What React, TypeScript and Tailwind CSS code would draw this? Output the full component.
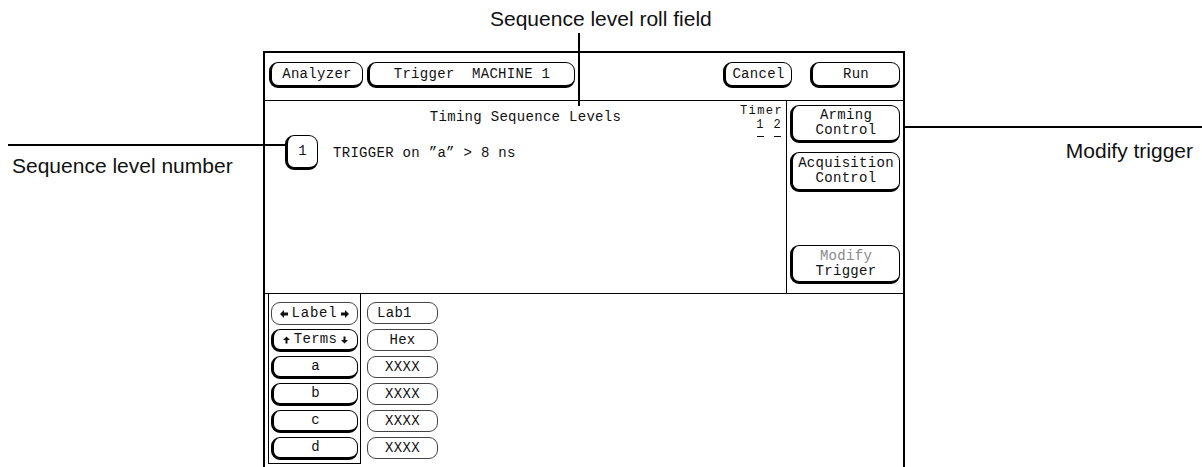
import type { ReactNode } from "react";

const mono = "font-['Liberation_Mono',monospace] text-[14px] tracking-[0.3px] text-[#111]";

type KeyProps = {
	children: ReactNode;
	className?: string;
	flat?: boolean;
};

/** 画面上のソフトキー（左と下が太い） */
function Key({ children, className = "", flat = false }: KeyProps) {
	return (
		<div
			className={`flex shrink-0 items-center justify-center rounded-[9px] border bg-white leading-[15px] ${
				flat ? "border-[#444]" : "border-black border-b-[3px] border-l-[3px]"
			} ${className}`}
		>
			{children}
		</div>
	);
}

function ArrowLeft() {
	return (
		<svg width="8" height="8" viewBox="0 0 8 8" className="shrink-0">
			<path d="M0 4 L4 0 L4 2.5 L8 2.5 L8 5.5 L4 5.5 L4 8 Z" fill="#111" />
		</svg>
	);
}

function ArrowRight() {
	return (
		<svg width="8" height="8" viewBox="0 0 8 8" className="shrink-0">
			<path d="M8 4 L4 0 L4 2.5 L0 2.5 L0 5.5 L4 5.5 L4 8 Z" fill="#111" />
		</svg>
	);
}

function ArrowUp() {
	return (
		<svg width="7" height="8" viewBox="0 0 7 8" className="shrink-0">
			<path d="M3.5 0.5 L7 4 L4.5 4 L4.5 7.5 L2.5 7.5 L2.5 4 L0 4 Z" fill="#111" />
		</svg>
	);
}

function ArrowDown() {
	return (
		<svg width="7" height="8" viewBox="0 0 7 8" className="shrink-0">
			<path d="M3.5 7.5 L7 4 L4.5 4 L4.5 0.5 L2.5 0.5 L2.5 4 L0 4 Z" fill="#111" />
		</svg>
	);
}

const terms = ["a", "b", "c", "d"];

function Screen() {
	return (
		<div className={`absolute left-[263px] top-[51px] flex w-[642px] flex-col border-2 border-black bg-white ${mono}`}>
			{/* header */}
			<div className="flex h-[48px] items-start border-b border-black pl-[4px] pr-[3px] pt-[9px]">
				<Key className="h-[26px] w-[94px]">Analyzer</Key>
				<Key className="ml-[4px] h-[26px] w-[208px] whitespace-pre">Trigger  MACHINE 1</Key>
				<div className="flex-1" />
				<Key className="h-[26px] w-[69px]">Cancel</Key>
				<Key className="ml-[18px] h-[26px] w-[90px]">Run</Key>
			</div>

			{/* sequence levels */}
			<div className="flex h-[193px] border-b border-black">
				<div className="grid w-[522px] grid-cols-[1fr_auto_1fr] content-start border-r border-black pt-[3px]">
					<div className="col-start-2 row-start-1 mt-[5px] leading-[16px]">Timing Sequence Levels</div>
					<div className="col-start-3 row-span-2 row-start-1 flex flex-col items-end justify-self-end pr-[3px] text-right text-[12px] leading-[14px] tracking-[1.4px]">
						<div>Timer</div>
						<div className="whitespace-pre pr-[1px]">1 2</div>
						<div className="mt-[4px] flex gap-[10px] pr-[2px]">
							<span className="h-px w-[7px] bg-[#111]" />
							<span className="h-px w-[7px] bg-[#111]" />
						</div>
					</div>
					<div className="col-span-2 col-start-1 row-start-2 ml-[20px] mt-[10px] flex items-center">
						<Key className="h-[35px] w-[33px]">1</Key>
						<span className="ml-[15px] whitespace-pre">TRIGGER on ”a” &gt; 8 ns</span>
					</div>
				</div>
				<div className="flex flex-1 flex-col px-[3px] pb-[9px] pt-[4px]">
					<Key className="h-[38px] flex-col">
						<span>Arming</span>
						<span>Control</span>
					</Key>
					<Key className="mt-[9px] h-[40px] flex-col">
						<span>Acquisition</span>
						<span>Control</span>
					</Key>
					<Key className="mt-auto h-[39px] flex-col">
						<span className="text-[#8a8a8a]">Modify</span>
						<span>Trigger</span>
					</Key>
				</div>
			</div>

			{/* labels / terms */}
			<div className="flex h-[176px] items-start pl-[3px]">
				<div className="flex h-[170px] w-[93px] flex-col gap-[4px] border-x border-b border-black px-[2px] pt-[8px]">
					<Key flat className="h-[23px] gap-[3px]">
						<ArrowLeft />
						<span className="tracking-[0.8px]">Label</span>
						<ArrowRight />
					</Key>
					<Key className="h-[23px] gap-[4px]">
						<ArrowUp />
						<span>Terms</span>
						<ArrowDown />
					</Key>
					{terms.map((t) => (
						<Key key={t} className="h-[23px]">
							{t}
						</Key>
					))}
				</div>
				<div className="ml-[6px] flex w-[71px] flex-col gap-[5px] pt-[8px]">
					<Key flat className="h-[22px] justify-start pl-[9px]">
						Lab1
					</Key>
					<Key flat className="h-[22px]">
						Hex
					</Key>
					{terms.map((t) => (
						<Key key={t} flat className="h-[22px]">
							XXXX
						</Key>
					))}
				</div>
			</div>
		</div>
	);
}

export default function App() {
	return (
		<div className="relative h-[467px] w-[1202px] overflow-hidden bg-white font-['Liberation_Sans',Arial,sans-serif] text-[21px] leading-none text-[#111]">
			<Screen />

			{/* callouts */}
			<div className="absolute left-[490px] top-[8px]">Sequence level roll field</div>
			<div className="absolute left-[578px] top-[33px] h-[73px] w-[2px] bg-black" />

			<div className="absolute left-[12px] top-[155px]">Sequence level number</div>
			<div className="absolute left-[8px] top-[144px] h-[2px] w-[277px] bg-black" />

			<div className="absolute right-[9px] top-[140px]">Modify trigger</div>
			<div className="absolute left-[905px] top-[126px] h-[2px] w-[297px] bg-black" />
		</div>
	);
}
